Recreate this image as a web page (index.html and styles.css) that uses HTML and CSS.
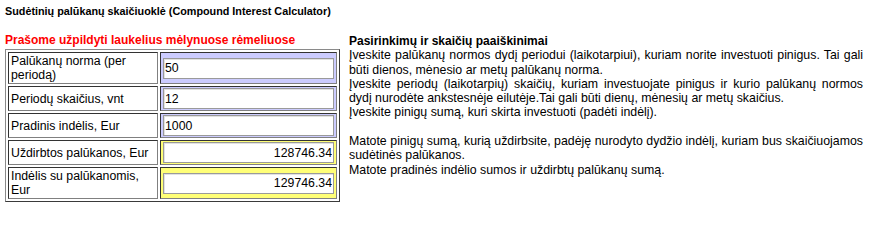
FILE: index.html
```html
<!DOCTYPE html>
<html lang="lt">
<head>
<meta charset="utf-8">
<title>Sudėtinių palūkanų skaičiuoklė</title>
<link rel="stylesheet" href="styles.css">
</head>
<body>
<div class="page">
  <h1 class="title">Sudėtinių palūkanų skaičiuoklė (Compound Interest Calculator)</h1>
  <div class="main">
    <div class="left">
      <div class="warn">Prašome užpildyti laukelius mėlynuose rėmeliuose</div>
      <table class="calc">
        <tr>
          <td class="label">Palūkanų norma (per periodą)</td>
          <td class="field in"><input type="text" value="50"></td>
        </tr>
        <tr>
          <td class="label">Periodų skaičius, vnt</td>
          <td class="field in"><input type="text" value="12"></td>
        </tr>
        <tr>
          <td class="label">Pradinis indėlis, Eur</td>
          <td class="field in"><input type="text" value="1000"></td>
        </tr>
        <tr>
          <td class="label">Uždirbtos palūkanos, Eur</td>
          <td class="field out"><input type="text" value="128746.34" readonly></td>
        </tr>
        <tr>
          <td class="label">Indėlis su palūkanomis, Eur</td>
          <td class="field out"><input type="text" value="129746.34" readonly></td>
        </tr>
      </table>
    </div>
    <div class="right">
      <div class="info-head">Pasirinkimų ir skaičių paaiškinimai</div>
      <p class="info">Įveskite palūkanų normos dydį periodui (laikotarpiui), kuriam norite investuoti pinigus. Tai gali būti dienos, mėnesio ar metų palūkanų norma.<br>Įveskite periodų (laikotarpių) skaičių, kuriam investuojate pinigus ir kurio palūkanų normos dydį nurodėte ankstesnėje eilutėje.Tai gali būti dienų, mėnesių ar metų skaičius.<br>Įveskite pinigų sumą, kuri skirta investuoti (padėti indėlį).<br><br>Matote pinigų sumą, kurią uždirbsite, padėję nurodyto dydžio indėlį, kuriam bus skaičiuojamos sudėtinės palūkanos.<br>Matote pradinės indėlio sumos ir uždirbtų palūkanų sumą.</p>
    </div>
  </div>
</div>
</body>
</html>
```

FILE: styles.css
```css
html, body {
  margin: 0;
  padding: 0;
  background: #ffffff;
  color: #000000;
  font-family: "Liberation Sans", Arial, sans-serif;
}

.page {
  padding: 4px 5px 0 5px;
}

.title {
  margin: 0;
  font-size: 10.8px;
  font-weight: bold;
  line-height: 15px;
}

.main {
  display: flex;
  align-items: flex-start;
  gap: 9px;
  margin-top: 14px;
}

.left {
  width: 335px;
  flex: none;
}

.warn {
  color: #ff0000;
  font-size: 12px;
  font-weight: bold;
  line-height: 15px;
  margin-bottom: 1px;
}

.calc {
  border-collapse: separate;
  border-spacing: 2px;
  border: 1px solid;
  border-color: #8a8a8a #3a3a3a #3a3a3a #8a8a8a;
  width: 335px;
}

.calc td {
  border: 1px solid;
  border-color: #333333 #808080 #808080 #333333;
  font-size: 12.3px;
  line-height: 14px;
  vertical-align: middle;
}

.label {
  width: 146px;
  padding: 1px 1px 1px 2px;
}

.field {
  width: 171px;
  padding: 1px 2px;
}

.field.in {
  background: #ccccff;
}

.field.out {
  background: #ffff77;
}

.field input {
  display: block;
  box-sizing: border-box;
  width: 171px;
  height: 21px;
  margin: 0;
  padding: 0 1px 0 1px;
  border: 1px solid #9a9a9a;
  box-shadow: inset 1px 1px 0 #e2e2e2;
  background: #ffffff;
  color: #000000;
  font-family: "Liberation Sans", Arial, sans-serif;
  font-size: 12.3px;
  outline: none;
}

.field.out input {
  text-align: right;
}

.right {
  width: 514px;
  flex: none;
  padding-top: 1px;
  font-size: 12px;
  line-height: 14.3px;
}

.info-head {
  font-weight: bold;
}

.info {
  margin: 0;
  font-size: 12.35px;
  text-align: justify;
}
```
